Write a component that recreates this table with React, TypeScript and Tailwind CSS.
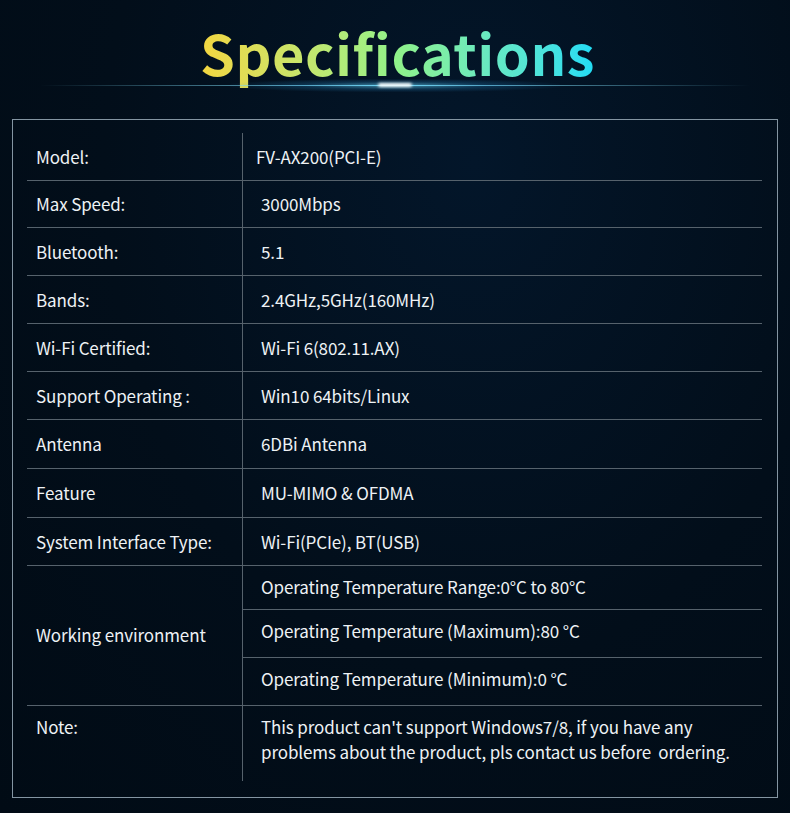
const FONT = { fontFamily: '"Noto Sans CJK SC", "Noto Sans", sans-serif' }

type Row = { label: string; value: string; h: string; pad?: string }

const ROWS: Row[] = [
  { label: 'Model:', value: 'FV-AX200(PCI-E)', h: 'h-[48px]', pad: 'pl-[13px]' },
  { label: 'Max Speed:', value: '3000Mbps', h: 'h-[47px]' },
  { label: 'Bluetooth:', value: '5.1', h: 'h-[48px]' },
  { label: 'Bands:', value: '2.4GHz,5GHz(160MHz)', h: 'h-[48px]' },
  { label: 'Wi-Fi Certified:', value: 'Wi-Fi 6(802.11.AX)', h: 'h-[48px]' },
  { label: 'Support Operating :', value: 'Win10 64bits/Linux', h: 'h-[48px]' },
  { label: 'Antenna', value: '6DBi Antenna', h: 'h-[49px]' },
  { label: 'Feature', value: 'MU-MIMO & OFDMA', h: 'h-[49px]' },
  { label: 'System Interface Type:', value: 'Wi-Fi(PCIe), BT(USB)', h: 'h-[48px]' },
]

const TEMPS = [
  { text: 'Operating Temperature Range:0°C to 80°C', h: 'h-[44px] pb-[2px]' },
  { text: 'Operating Temperature (Maximum):80 °C', h: 'h-[48px] pb-[5px]' },
  { text: 'Operating Temperature (Minimum):0 °C', h: 'h-[47px] pb-[5px]' },
]

function Header() {
  return (
    <header className="relative flex h-[119px] justify-center">
      <h1
        className="ml-[5px] mt-[14px] bg-gradient-to-r from-[#f3d63f] via-[#8ff28a] to-[#1fdcf5] bg-clip-text text-[56px] font-bold leading-[75px] tracking-[0.5px] text-transparent"
        style={FONT}
      >
        Specifications
      </h1>
      {/* glow under the title */}
      <div className="pointer-events-none absolute left-[40px] right-[40px] top-[85px] h-px bg-gradient-to-r from-transparent via-[#7fdcf6] to-transparent" />
      <div className="pointer-events-none absolute left-[230px] top-[79px] h-[13px] w-[330px] rounded-full bg-[radial-gradient(ellipse_at_center,rgba(100,210,245,0.6)_0%,rgba(40,140,200,0.25)_40%,transparent_75%)]" />
      <div className="pointer-events-none absolute left-[378px] top-[83px] h-[4px] w-[34px] rounded-full bg-white blur-[1.5px]" />
    </header>
  )
}

export default function App() {
  return (
    <div
      className="min-h-[813px] w-[790px] bg-[radial-gradient(ellipse_at_60%_20%,#03162a_0%,#020e1a_55%,#010b15_100%)] text-[17px] tracking-[-0.12px] text-[#eef2f5]"
      style={FONT}
    >
      <Header />
      <div className="mx-[12px] h-[679px] border border-[#8495a2] pl-[14px] pr-[15px] pt-[13px]">
        <div className="grid grid-cols-[215px_520px]">
          {ROWS.map((row) => (
            <div key={row.label} className="contents">
              <div className={`${row.h} flex items-center border-b border-[#56626c] pl-[9px]`}>
                {row.label}
              </div>
              <div
                className={`${row.h} flex items-center border-b border-l border-[#56626c] ${row.pad ?? 'pl-[18px]'}`}
              >
                {row.value}
              </div>
            </div>
          ))}

          <div className="flex items-center border-b border-[#56626c] pb-[2px] pl-[9px]">Working environment</div>
          <div className="flex flex-col border-b border-l border-[#56626c]">
            {TEMPS.map((t, i) => (
              <div
                key={t.text}
                className={`${t.h} flex items-center pl-[18px] ${i < TEMPS.length - 1 ? 'border-b border-[#56626c]' : ''}`}
              >
                {t.text}
              </div>
            ))}
          </div>

          <div className="h-[75px] pl-[9px] pt-[8px] leading-[25px]">Note:</div>
          <div className="h-[75px] border-l border-[#56626c] pl-[18px] pt-[8px] leading-[25px]">
            This product can't support Windows7/8, if you have any
            <br />
            problems about the product, pls contact us before&nbsp; ordering.
          </div>
        </div>
      </div>
    </div>
  )
}
